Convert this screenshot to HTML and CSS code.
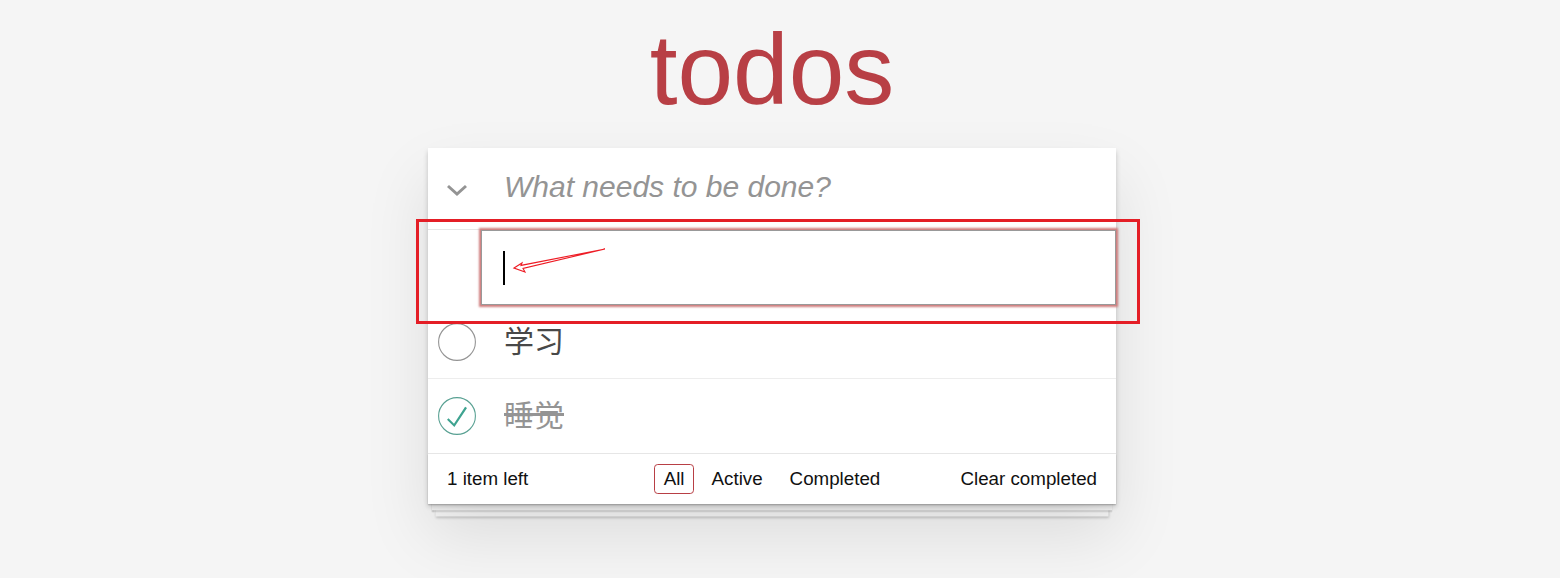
FILE: index.html
```html
<!DOCTYPE html>
<html lang="en">
<head>
<meta charset="utf-8">
<title>todos</title>
<link rel="stylesheet" href="styles.css">
</head>
<body>
<div class="page">
  <h1 class="title">todos</h1>
  <section class="todoapp">
    <header class="header">
      <svg class="toggle-all" width="22" height="12" viewBox="0 0 22 12"><polyline points="2,2 11,10 20,2" fill="none" stroke="#949494" stroke-width="3"/></svg>
      <input class="new-todo" placeholder="What needs to be done?">
    </header>
    <section class="main">
      <ul class="todo-list">
        <li class="editing"><div class="edit"><span class="caret"></span></div></li>
        <li class="item">
          <svg class="toggle" width="38" height="38" viewBox="0 0 38 38"><circle cx="19" cy="19" r="18.4" fill="none" stroke="#949494" stroke-width="1.1"/></svg>
          <label class="label">学习</label>
        </li>
        <li class="item completed">
          <svg class="toggle" width="38" height="38" viewBox="0 0 38 38"><circle cx="19" cy="19" r="18.4" fill="none" stroke="#59a193" stroke-width="1.1"/><path d="M27.1 9.75 L16 26.8 L10.5 21.2 L9 22.7 L16.4 30.1 L29 10.9 Z" fill="#3ea390"/></svg>
          <label class="label">睡觉</label>
        </li>
      </ul>
    </section>
    <footer class="footer">
      <span class="count">1 item left</span>
      <ul class="filters">
        <li><a class="filter selected">All</a></li>
        <li><a class="filter">Active</a></li>
        <li><a class="filter">Completed</a></li>
      </ul>
      <span class="clear">Clear completed</span>
    </footer>
    <div class="annot-box"></div>
    <svg class="annot-arrow" width="100" height="32" viewBox="0 0 100 32"><polygon points="6,24 14,19 13,21.4 97,5 15,24.4 17,28" fill="none" stroke="#ee1c25" stroke-width="1.1" stroke-linejoin="miter"/></svg>
  </section>
</div>
</body>
</html>
```
FILE: styles.css
```css
* { box-sizing: border-box; }
html, body {
  height: 100%;
}
body {
  margin: 0;
  background: #f5f5f5;
  font-family: "Liberation Sans", Arial, sans-serif;
  color: #111;
  overflow: hidden;
}
.page {
  min-height: 100%;
  padding: 19px 16px 0 0;
}
.title {
  margin: 0 0 29px;
  text-align: center;
  font-size: 100px;
  line-height: 100px;
  font-weight: 200;
  color: #b83f45;
}
.todoapp {
  position: relative;
  width: 688px;
  margin: 0 auto;
  background: #fff;
  box-shadow: 0 2.5px 5px 0 rgba(0,0,0,0.2), 0 31px 62px 0 rgba(0,0,0,0.1);
}
.header {
  display: flex;
  align-items: center;
  height: 81px;
}
.toggle-all {
  margin-left: 18px;
  margin-top: 2px;
  flex: none;
}
.new-todo {
  flex: 1;
  height: 81px;
  border: none;
  outline: none;
  padding: 0 20px 4px 36px;
  font-family: "Liberation Sans", Arial, sans-serif;
  font-size: 30px;
  color: #111;
  background: transparent;
}
.new-todo::placeholder {
  font-style: italic;
  color: #949494;
}
.main {
  border-top: 1px solid #e6e6e6;
}
.todo-list {
  list-style: none;
  margin: 0;
  padding: 0;
}
.editing {
  height: 75px;
  padding-left: 53px;
  position: relative;
  z-index: 1;
}
.edit {
  height: 75px;
  width: 635px;
  border: 1px solid #999;
  box-shadow: 0 0 2px 2px #cf7d7d;
  background: #fff;
  display: flex;
  align-items: center;
}
.caret {
  display: block;
  width: 2px;
  height: 34px;
  margin-left: 21px;
  background: #000;
}
.item {
  display: flex;
  align-items: center;
  height: 74px;
  border-bottom: 1px solid #ededed;
  padding-left: 10px;
}
.item:last-child {
  border-bottom: none;
}
.toggle {
  flex: none;
}
.label {
  margin-left: 28px;
  padding-bottom: 6px;
  font-family: "Noto Sans CJK SC", "Liberation Sans", sans-serif;
  font-size: 30px;
  line-height: 36px;
  color: #484848;
}
.completed .label {
  color: #949494;
  text-decoration: line-through;
}
.footer {
  position: relative;
  display: grid;
  grid-template-columns: 1fr auto 1fr;
  align-items: center;
  height: 51px;
  padding: 0 19px;
  border-top: 1px solid #e6e6e6;
  font-size: 18.75px;
  color: #111;
}
.footer::before {
  content: "";
  position: absolute;
  left: 0;
  right: 0;
  bottom: 0;
  height: 50px;
  z-index: -1;
  box-shadow: 0 1.25px 1.25px rgba(0,0,0,0.2),
              0 10px 0 -3.75px #f6f6f6,
              0 11.25px 1.25px -3.75px rgba(0,0,0,0.2),
              0 20px 0 -7.5px #f6f6f6,
              0 21.25px 2.5px -7.5px rgba(0,0,0,0.2);
}
.count {
  justify-self: start;
}
.filters {
  display: flex;
  list-style: none;
  margin: 0;
  padding: 0;
}
.filter {
  display: block;
  margin: 0 3.75px;
  padding: 4px 8.75px;
  border: 1.25px solid transparent;
  border-radius: 3.75px;
  line-height: 20px;
  color: #111;
}
.filter.selected {
  border-color: #b83f45;
}
.clear {
  justify-self: end;
}
.annot-box {
  position: absolute;
  left: -12px;
  top: 71px;
  width: 724px;
  height: 105px;
  border: 3px solid #e41e26;
  z-index: 3;
}
.annot-arrow {
  position: absolute;
  left: 80px;
  top: 96px;
  z-index: 3;
}
```
